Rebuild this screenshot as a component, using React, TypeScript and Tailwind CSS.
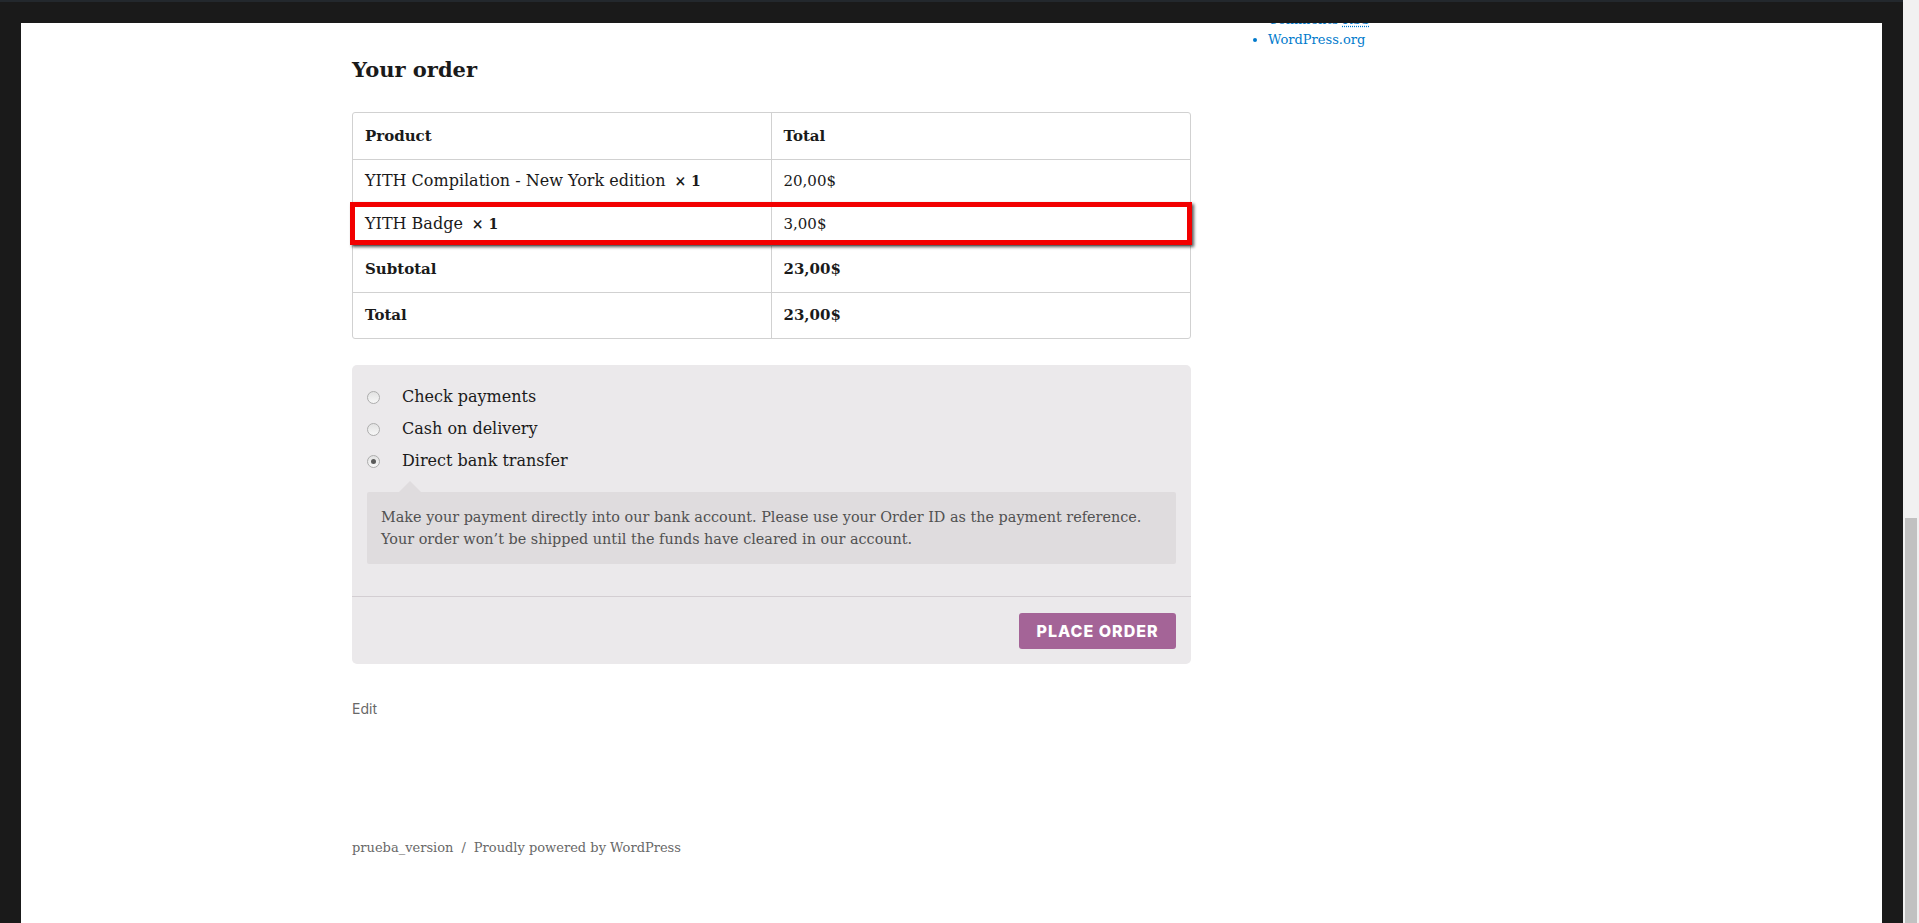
import React from "react";

const serif = "font-['DejaVu_Serif','Liberation_Serif',serif]";

function Radio({ checked }: { checked?: boolean }) {
  return (
    <span className="w-[13px] h-[13px] rounded-full border border-[#adadad] bg-gradient-to-b from-[#e2e2e2] to-[#f7f7f7] flex items-center justify-center">
      {checked && <span className="w-[5px] h-[5px] rounded-full bg-[#5a5a5a]" />}
    </span>
  );
}

export default function App() {
  return (
    <div className="h-[923px] w-[1919px] overflow-hidden flex bg-[#1a1a1a]">
      <div className="flex-1 flex flex-col">
        <div className="h-[2px] bg-[#23282d]" />
        <div className="h-[21px]" />
        <div className={`flex-1 mx-[21px] bg-white overflow-hidden flex items-start ${serif} text-[#1a1a1a]`}>
          {/* main column */}
          <div className="ml-[331px] w-[839px] flex flex-col">
            <h3 className="mt-[33px] h-[28px] leading-[28px] text-[21px] font-bold">Your order</h3>

            <div className="mt-[28px] border border-[#d1d1d1] rounded-[3px] text-[16px]">
              <div className="grid grid-cols-2 h-[47px] border-b border-[#d1d1d1] font-bold text-[15px]">
                <div className="px-[12px] flex items-center border-r border-[#d1d1d1]">Product</div>
                <div className="px-[12px] flex items-center">Total</div>
              </div>
              <div className="grid grid-cols-2 h-[43px] border-b border-[#d1d1d1]">
                <div className="px-[12px] flex items-center border-r border-[#d1d1d1]">
                  YITH Compilation - New York edition
                  <span className="ml-[9px] font-bold text-[14px]">× 1</span>
                </div>
                <div className="px-[12px] flex items-center text-[15px]">20,00$</div>
              </div>
              <div className="relative grid grid-cols-2 h-[43px] border-b border-[#d1d1d1]">
                <div className="px-[12px] flex items-center border-r border-[#d1d1d1]">
                  YITH Badge
                  <span className="ml-[9px] font-bold text-[14px]">× 1</span>
                </div>
                <div className="px-[12px] flex items-center text-[15px]">3,00$</div>
                <div className="absolute left-[-3px] top-[-1px] w-[842px] h-[43px] border-[5px] border-[#f20000] shadow-[2px_2px_3px_rgba(0,0,0,0.65)]" />
              </div>
              <div className="grid grid-cols-2 h-[47px] border-b border-[#d1d1d1] font-bold text-[15px]">
                <div className="px-[12px] flex items-center border-r border-[#d1d1d1]">Subtotal</div>
                <div className="px-[12px] flex items-center">23,00$</div>
              </div>
              <div className="grid grid-cols-2 h-[45px] font-bold text-[15px]">
                <div className="px-[12px] flex items-center border-r border-[#d1d1d1]">Total</div>
                <div className="px-[12px] flex items-center">23,00$</div>
              </div>
            </div>

            <div className="mt-[26px] bg-[#ebe9eb] rounded-[5px] flex flex-col">
              <div className="pt-[16px] px-[15px] flex flex-col">
                {[
                  ["Check payments", false],
                  ["Cash on delivery", false],
                  ["Direct bank transfer", true],
                ].map(([label, checked]) => (
                  <div key={label as string} className="h-[32px] flex items-center">
                    <Radio checked={checked as boolean} />
                    <span className="ml-[22px] text-[16px]">{label as string}</span>
                  </div>
                ))}
                <div className="relative mt-[15px] bg-[#dfdcde] rounded-[2px] px-[14px] py-[14px] text-[14.4px] leading-[22px] text-[#515151]">
                  <span className="absolute left-[32px] top-[-11px] w-0 h-0 border-l-[11px] border-r-[11px] border-b-[11px] border-l-transparent border-r-transparent border-b-[#dfdcde]" />
                  Make your payment directly into our bank account. Please use your Order ID as the payment reference.
                  <br />
                  Your order won’t be shipped until the funds have cleared in our account.
                </div>
              </div>
              <div className="mt-[32px] border-t border-[#d3ced2] pt-[16px] pb-[15px] px-[15px] flex justify-end">
                <button className="w-[157px] h-[36px] rounded-[3px] bg-[#a46497] text-white font-['Inter',sans-serif] font-extrabold text-[16px] tracking-[1px] leading-[36px]">
                  PLACE ORDER
                </button>
              </div>
            </div>

            <div className="mt-[35px] h-[20px] leading-[20px] text-[14px] text-[#686868] font-['Inter',sans-serif]">Edit</div>

            <div className="mt-[117px] h-[24px] leading-[24px] text-[13px] text-[#686868]">
              prueba_version
              <span className="mx-[8px]">/</span>
              Proudly powered by WordPress
            </div>
          </div>

          {/* sidebar */}
          <ul className="mt-[-13px] ml-[63px] pl-[14px] list-disc text-[13px] leading-[20px] text-[#007acc]">
            <li>
              Comments <abbr className="underline decoration-dotted underline-offset-2">RSS</abbr>
            </li>
            <li>WordPress.org</li>
          </ul>
        </div>
      </div>
      <div className="w-[16px] bg-[#f1f1f1] flex flex-col">
        <div className="mt-[518px] mx-[2px] flex-1 bg-[#c1c1c1]" />
      </div>
    </div>
  );
}
